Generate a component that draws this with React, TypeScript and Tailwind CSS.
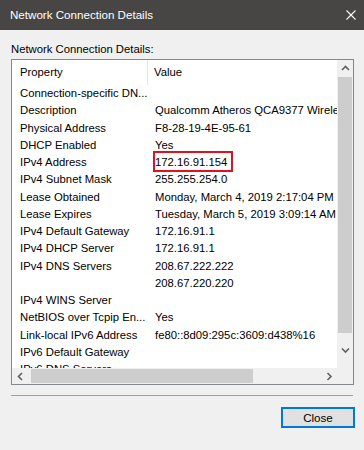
import React from 'react';

const rows: [string, string][] = [
    ['Connection-specific DN...', ''],
    ['Description', 'Qualcomm Atheros QCA9377 Wireless Network Adapter'],
    ['Physical Address', 'F8-28-19-4E-95-61'],
    ['DHCP Enabled', 'Yes'],
    ['IPv4 Address', '172.16.91.154'],
    ['IPv4 Subnet Mask', '255.255.254.0'],
    ['Lease Obtained', 'Monday, March 4, 2019 2:17:04 PM'],
    ['Lease Expires', 'Tuesday, March 5, 2019 3:09:14 AM'],
    ['IPv4 Default Gateway', '172.16.91.1'],
    ['IPv4 DHCP Server', '172.16.91.1'],
    ['IPv4 DNS Servers', '208.67.222.222'],
    ['', '208.67.220.220'],
    ['IPv4 WINS Server', ''],
    ['NetBIOS over Tcpip En...', 'Yes'],
    ['Link-local IPv6 Address', 'fe80::8d09:295c:3609:d438%16'],
    ['IPv6 Default Gateway', ''],
    ['IPv6 DNS Servers', ''],
];

function Chevron({ dir }: { dir: 'up' | 'down' | 'left' | 'right' }) {
    const d = {
        up: 'M1 5 L4.5 1.5 L8 5',
        down: 'M1 1.5 L4.5 5 L8 1.5',
        left: 'M5 1 L1.5 4.5 L5 8',
        right: 'M1.5 1 L5 4.5 L1.5 8',
    }[dir];
    const horiz = dir === 'left' || dir === 'right';
    return (
        <svg width={horiz ? 7 : 9} height={horiz ? 9 : 7} viewBox={horiz ? '0 0 7 9' : '0 0 9 7'}>
            <path d={d} fill="none" stroke="#606060" strokeWidth="1.6" />
        </svg>
    );
}

export default function App() {
    return (
        <div
            className="w-[364px] h-[450px] bg-[#f0f0f0] flex flex-col text-[11.3px] text-black overflow-hidden"
            style={{ fontFamily: '"Liberation Sans", Arial, sans-serif' }}
        >
            {/* title bar */}
            <div className="h-[30px] bg-[#484644] flex items-center justify-between pl-[10px] pr-[7px] shrink-0">
                <span className="text-white text-[11.6px]">Network Connection Details</span>
                <svg width="10" height="10" viewBox="0 0 10 10" className="mr-[1px]">
                    <path d="M0.5 0.5 L9.5 9.5 M9.5 0.5 L0.5 9.5" stroke="#ffffff" strokeWidth="1.1" />
                </svg>
            </div>

            <div className="flex flex-col pl-[11px] pr-[9px] pt-[10px]">
                <div className="leading-[18px] h-[18px]">Network Connection Details:</div>

                {/* list box */}
                <div className="mt-px w-[343px] h-[326px] border border-[#828790] bg-white grid grid-cols-[325px_16px] grid-rows-[308px_16px]">
                    <div className="overflow-hidden relative">
                        <div className="h-[25px] flex bg-white">
                            <div className="w-[136px] pl-[8px] flex items-center border-r border-[#e5e5e5]">Property</div>
                            <div className="pl-[6px] flex items-center">Value</div>
                        </div>
                        {rows.map(([k, v], i) => (
                            <div key={i} className="h-[17.25px] flex items-center whitespace-nowrap">
                                <div className="w-[137px] pl-[8px] shrink-0 overflow-hidden">{k}</div>
                                <div className="pl-[6px] relative">
                                    {v}
                                    {k === 'IPv4 Address' && (
                                        <div className="absolute left-[4px] -top-[3px] w-[80px] h-[21px] border-2 border-[#e3111f]" />
                                    )}
                                </div>
                            </div>
                        ))}
                    </div>

                    {/* vertical scrollbar */}
                    <div className="bg-[#f0f0f0] flex flex-col">
                        <div className="h-[17px] flex items-center justify-center">
                            <Chevron dir="up" />
                        </div>
                        <div className="h-[256px] mx-px bg-[#cdcdcd]" />
                        <div className="flex-1 flex items-center justify-center">
                            <Chevron dir="down" />
                        </div>
                    </div>

                    {/* horizontal scrollbar */}
                    <div className="bg-[#f0f0f0] flex items-center">
                        <div className="w-[17px] flex items-center justify-center">
                            <Chevron dir="left" />
                        </div>
                        <div className="w-[222px] h-[14px] ml-[2px] bg-[#cdcdcd]" />
                        <div className="flex-1 flex items-center justify-end pr-[4px]">
                            <Chevron dir="right" />
                        </div>
                    </div>
                    <div className="bg-[#f0f0f0]" />
                </div>

                {/* separator */}
                <div className="mt-[10px] w-[342px] h-px bg-[#a0a0a0]" />

                <div className="flex justify-end mt-[11px]">
                    <button className="w-[74px] h-[21px] bg-[#e1e1e1] border border-[#0078d7] outline outline-1 -outline-offset-2 outline-[#0078d7] text-[11.6px] leading-none">
                        Close
                    </button>
                </div>
            </div>
        </div>
    );
}
